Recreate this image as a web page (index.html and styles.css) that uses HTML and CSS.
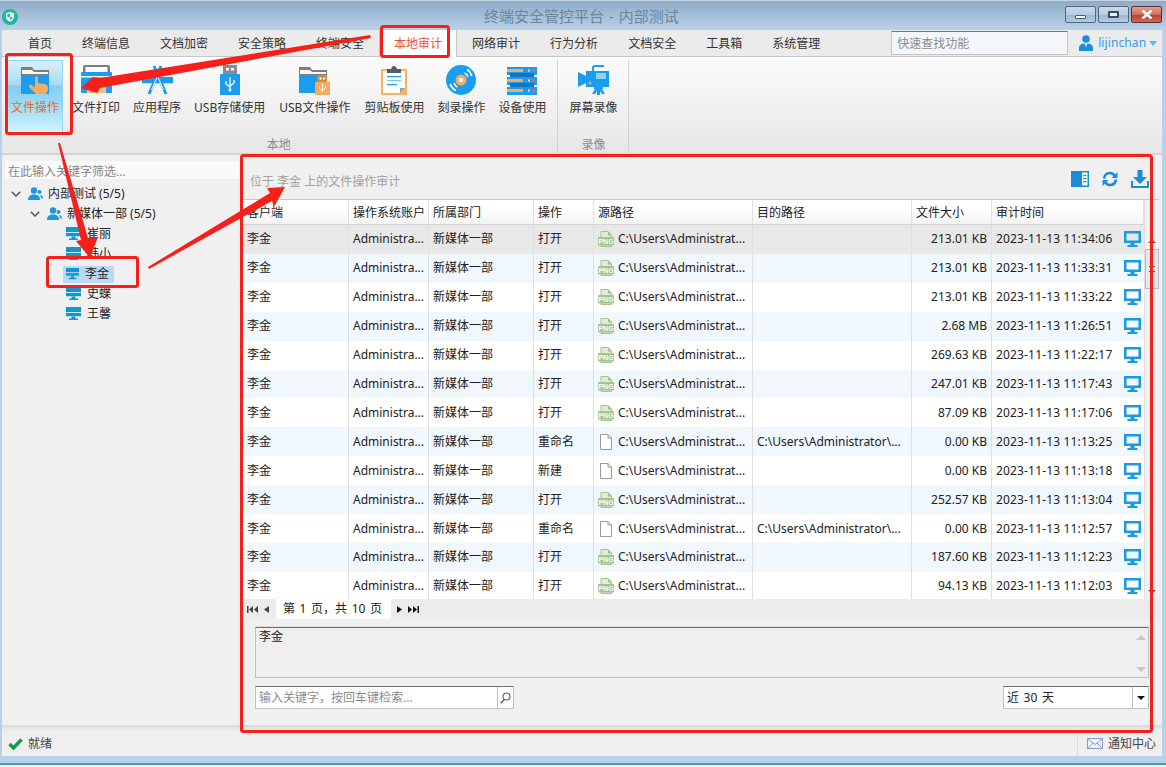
FILE: index.html
```html
<!DOCTYPE html>
<html lang="zh-CN">
<head>
<meta charset="utf-8">
<title>终端安全管控平台 - 内部测试</title>
<link rel="stylesheet" href="styles.css">
</head>
<body>
<svg class="defs" xmlns="http://www.w3.org/2000/svg">
  <symbol id="mon" viewBox="0 0 17 16"><path fill="#1a9ae0" d="M0 0h17v12H0zM2.500 2.500v7h12v-7zM6.500 12h4v2h3v2H3.500v-2h3z"/></symbol>
  <symbol id="leaf" viewBox="0 0 15 14"><path fill="#1296cf" d="M0 0h15v9H0zM5.500 9h4v2.500h2.500V13H3v-1.500h2.500z"/><path fill="#cfeaf5" d="M0 5h15v1H0z"/><path fill="#8fd0ea" d="M0 9h15v.6H0z"/></symbol>
  <symbol id="people" viewBox="0 0 15 14"><circle cx="6" cy="3.500" r="3.200" fill="#1a9ae0"/><path fill="#1a9ae0" d="M0 13c0-4 2.500-5.500 6-5.500s6 1.500 6 5.500z"/><circle cx="11.500" cy="5" r="2" fill="#1a9ae0"/><path fill="#1a9ae0" d="M11.500 8c2 0 3.500 1 3.500 3.500h-2c0-1.500-.5-2.500-1.500-3.500z"/></symbol>
  <symbol id="chev" viewBox="0 0 10 6"><path fill="none" stroke="#555" stroke-width="1.500" d="M.8.800 5 5l4.200-4.200"/></symbol>
  <symbol id="png" viewBox="0 0 16 16"><path fill="#dfeed2" stroke="#a3c48f" d="M3 .5h7l3.500 3.500v11.500H3z"/><path fill="#a3c48f" d="M10 0v4.500h4z"/><rect x="0" y="6" width="16" height="8.500" rx="1" fill="#a3c48f"/><text x="8" y="12.800" font-size="7" font-weight="700" text-anchor="middle" fill="#fff" font-family="Liberation Sans">PNG</text></symbol>
  <symbol id="doc" viewBox="0 0 16 16"><path fill="#fff" stroke="#9a9a9a" d="M2.500.5h7.500l3.500 3.500v11.500h-11z"/><path fill="none" stroke="#9a9a9a" d="M10 .5V4h3.500"/></symbol>
</svg>

<div class="window">
  <header class="titlebar">
    <svg class="logo" width="16" height="16" viewBox="0 0 16 16"><circle cx="8" cy="8" r="8" fill="#1fb89a"/><path fill="#fff" d="M8 3l4 1.300v3.500c0 2.500-1.800 4-4 5-2.200-1-4-2.500-4-5V4.300z"/><path fill="#1fb89a" d="M8 4.500v3.500H5.300c0-.5 0-1 0-2.800zM8 8h2.700c-.2 1.500-1.300 2.600-2.700 3.300z"/></svg>
    <span class="title-text">终端安全管控平台 - 内部测试</span>
    <div class="winbtns">
      <span class="winbtn"><i class="glyph-min"></i></span>
      <span class="winbtn"><i class="glyph-max"></i></span>
      <span class="winbtn winbtn-close"><svg width="12" height="9" viewBox="0 0 12 9"><path stroke="#fff" stroke-width="2.600" d="M1.500.5l9 8M10.500.5l-9 8"/></svg></span>
    </div>
  </header>

  <div class="frame">
    <nav class="tabs">
      <span class="tab">首页</span>
      <span class="tab">终端信息</span>
      <span class="tab">文档加密</span>
      <span class="tab">安全策略</span>
      <span class="tab">终端安全</span>
      <span class="tab tab-active">本地审计</span>
      <span class="tab">网络审计</span>
      <span class="tab">行为分析</span>
      <span class="tab">文档安全</span>
      <span class="tab">工具箱</span>
      <span class="tab">系统管理</span>
      <span class="quick">快速查找功能</span>
      <span class="user">
        <svg width="14" height="16" viewBox="0 0 14 16"><circle cx="7" cy="4" r="3.800" fill="#1a8fdc"/><path fill="#1a8fdc" d="M0 16v-3c0-3 2.500-4.500 5.500-4.500L7 12l1.500-3.500c3 0 5.500 1.500 5.500 4.500v3z"/></svg>
        <span class="user-name">lijinchan</span><i class="user-caret"></i>
      </span>
    </nav>

    <section class="ribbon">
      <div class="group">
        <div class="items">
          <div class="item item-active">
            <svg class="ico" width="30" height="30" viewBox="0 0 30 30"><path fill="#7d7d7d" d="M1 2h11l2 3h15v5H1z"/><path fill="#f6f6f6" d="M2 5h10l2 2h14v2H2z"/><path fill="#1a9cf0" d="M1 10h28v19H1z"/><path fill="#f4ab5e" d="M15 13c0-2 3-2 3 0v5l6 1c3 .5 4 2 4 4v2l-2 4H16l-7-7c-1-1.500 1-3 2.500-2l3.500 2.500z"/></svg>
            <span>文件操作</span>
          </div>
          <div class="item">
            <svg class="ico" width="33" height="30" viewBox="0 0 33 30"><path fill="#7d7d7d" d="M3 2a2 2 0 0 1 2-2h23a2 2 0 0 1 2 2v7H3z"/><path fill="#fff" d="M5.500 2h22v5h-22z"/><path fill="#1a9cf0" d="M1 8a1 1 0 0 1 1-1h29a1 1 0 0 1 1 1v19a1 1 0 0 1-1 1H2a1 1 0 0 1-1-1z"/><path fill="#fff" d="M1 11h31v1.500H1z"/><path fill="#f6c184" d="M7 19h19v9H7z"/></svg>
            <span>文件打印</span>
          </div>
          <div class="item">
            <svg class="ico" width="33" height="30" viewBox="0 0 33 30"><path fill="#1a9cf0" d="M1 12h31v7H1z"/><path stroke="#f4f4f4" stroke-width="1.500" d="M1 19h31"/><path stroke="#1a9cf0" stroke-width="3" d="M8 29 20 1M25 29 13 1"/><path stroke="#f4f4f4" stroke-width="1" d="M10.500 25 19.500 4M22.500 25 14 5"/></svg>
            <span>应用程序</span>
          </div>
          <div class="item item-wide">
            <svg class="ico" width="20" height="30" viewBox="0 0 20 30"><path fill="#8a8a8a" d="M3 0h14v10H3z"/><path fill="#fff" d="M6 3h3v2.500H6zM11 3h3v2.500h-3z"/><path fill="#1a9cf0" d="M0 10a1 1 0 0 1 1-1h18a1 1 0 0 1 1 1v19a1 1 0 0 1-1 1H1a1 1 0 0 1-1-1z"/><path fill="none" stroke="#fff" stroke-width="1.300" d="M10 12v13M6 16v3l4 3M14 15v3l-4 3"/><circle cx="10" cy="25" r="1.500" fill="#fff"/></svg>
            <span>USB存储使用</span>
          </div>
          <div class="item item-wide">
            <svg class="ico" width="31" height="30" viewBox="0 0 31 30"><path fill="#7d7d7d" d="M0 2h11l2 3h15v5H0z"/><path fill="#f6f6f6" d="M1 5h10l2 2h14v2H1z"/><path fill="#1a9cf0" d="M0 10h28v18H0z"/><path fill="#d08c3e" d="M18 10h10v8H18z"/><path fill="#fff" d="M20.500 12.500h2v2h-2zM24 12.500h2v2h-2z"/><path fill="#f4ab5e" d="M16 17h15v13H16z"/><path fill="none" stroke="#fff" d="M23.500 19v8M20.500 21.500v2l3 2M26.500 21v2l-3 2"/></svg>
            <span>USB文件操作</span>
          </div>
          <div class="item">
            <svg class="ico" width="26" height="30" viewBox="0 0 26 30"><path fill="#f6b261" d="M0 4h26v26H0z"/><path fill="#fff" d="M2 6h22v17l-5 5H2z"/><path fill="#9a9a9a" d="M24 23h-5v5z"/><path fill="#555f6c" d="M6 4h4c.5-1 1-3 3-3s2.500 2 3 3h4v4H6z"/><path fill="#1a9cf0" d="M6 11h14v1.200H6zM6 19h10v1.200H6z"/><path fill="#7cc4f2" d="M6 15h14v1.200H6z"/></svg>
            <span>剪贴板使用</span>
          </div>
          <div class="item">
            <svg class="ico" width="30" height="30" viewBox="0 0 30 30"><circle cx="15" cy="15" r="15" fill="#1a9cf0"/><circle cx="15" cy="15" r="5.500" fill="#f4ab5e"/><circle cx="15" cy="15" r="2.300" fill="#fff"/><path fill="none" stroke="#fff" stroke-width="1.800" d="M21 4.500c2.500 1.500 4 3.500 4.700 6.500M10 25.500C7 24 5 22 4.300 19"/><path fill="none" stroke="#fff" stroke-width="1.500" d="M18.500 8c2 .8 3 2.200 3.500 4M11.500 22c-2-.8-3-2.200-3.500-4"/></svg>
            <span>刻录操作</span>
          </div>
          <div class="item">
            <svg class="ico" width="30" height="30" viewBox="0 0 30 30"><path fill="#1a9cf0" d="M0 2h30v8H0zM0 12h30v8H0zM0 22h30v8H0z"/><path fill="#1476b8" d="M3 8h24v4H3zM3 18h24v4H3z"/><path fill="#f4ab5e" d="M0 4h16v3H0zM0 14h16v3H0zM0 24h16v3H0z"/><path fill="#e8605a" d="M25 4h3v3h-3zM25 14h3v3h-3zM25 24h3v3h-3z"/><path fill="#cfeaf8" d="M21 4.500h2v2h-2zM21 14.500h2v2h-2zM21 24.500h2v2h-2z"/></svg>
            <span>设备使用</span>
          </div>
        </div>
        <div class="group-label">本地</div>
      </div>
      <div class="group">
        <div class="items">
          <div class="item">
            <svg class="ico" width="31" height="30" viewBox="0 0 31 30"><path fill="#1a9cf0" d="M8 6h23v16H8z"/><path fill="#1a9cf0" d="M0 7l8 4v7l-8 4z"/><path fill="none" stroke="#1a9cf0" stroke-width="2" d="M15 6V3c0-1.500 1-2 2-2h9"/><path fill="#8ed2f8" d="M18 8h10v6H18z"/><circle cx="12" cy="18" r="1.500" fill="#f4ab5e"/><path fill="#1a9cf0" d="M16 22h9v2h-9zM17 24h7l3 5h-3l-2-3v4h-3v-4l-2 3h-3z"/></svg>
            <span>屏幕录像</span>
          </div>
        </div>
        <div class="group-label">录像</div>
      </div>
    </section>

    <main class="body">
      <aside class="left">
        <div class="filter">在此输入关键字筛选...</div>
        <ul class="tree">
          <li class="node"><svg class="chev" width="10" height="6"><use href="#chev"/></svg><svg class="people" width="15" height="14"><use href="#people"/></svg><span>内部测试 (5/5)</span></li>
          <li class="node node-2"><svg class="chev" width="10" height="6"><use href="#chev"/></svg><svg class="people" width="15" height="14"><use href="#people"/></svg><span>新媒体一部 (5/5)</span></li>
          <li class="node node-3"><svg width="15" height="14"><use href="#leaf"/></svg><span>崔丽</span></li>
          <li class="node node-3"><svg width="15" height="14"><use href="#leaf"/></svg><span>韩小</span></li>
          <li class="node node-3"><span class="sel"><svg width="15" height="14"><use href="#leaf"/></svg><span>李金</span></span></li>
          <li class="node node-3"><svg width="15" height="14"><use href="#leaf"/></svg><span>史蝶</span></li>
          <li class="node node-3"><svg width="15" height="14"><use href="#leaf"/></svg><span>王馨</span></li>
        </ul>
      </aside>

      <section class="right">
        <div class="toolbar">
          <span class="caption">位于 李金 上的文件操作审计</span>
          <span class="tools">
            <svg width="18" height="16" viewBox="0 0 18 16"><path fill="#1a8cd8" d="M0 0h18v16H0z"/><path fill="#fff" d="M11 1.500h5.500v13H11z"/><path fill="#1a8cd8" d="M12 4h3.500v1.200H12zM12 7h3.500v1.200H12zM12 10h3.500v1.200H12z"/></svg>
            <svg width="16" height="16" viewBox="0 0 16 16"><path fill="none" stroke="#1a8cd8" stroke-width="2.600" d="M2 7.500C2.500 4 5 2 8 2c2 0 3.500 1 4.500 2.500M14 8.500c-.5 3.500-3 5.500-6 5.500-2 0-3.500-1-4.500-2.500"/><path fill="#1a8cd8" d="M15.500 1v6h-6zM.5 15V9h6z"/></svg>
            <svg width="18" height="18" viewBox="0 0 18 18"><path fill="#1a8cd8" d="M6.500 0h5v7H16l-7 7-7-7h4.500z"/><path fill="none" stroke="#1a8cd8" stroke-width="2" d="M1 11v6h16v-6"/></svg>
          </span>
        </div>

        <div class="table-wrap">
          <div class="table">
            <div class="row head"><span class="cell">客户端</span><span class="cell">操作系统账户</span><span class="cell">所属部门</span><span class="cell">操作</span><span class="cell">源路径</span><span class="cell">目的路径</span><span class="cell">文件大小</span><span class="cell">审计时间</span></div>
            <div class="row selrow"><span class="cell">李金</span><span class="cell">Administra...</span><span class="cell">新媒体一部</span><span class="cell">打开</span><span class="cell path"><svg width="16" height="16"><use href="#png"/></svg>C:\Users\Administrat...</span><span class="cell"></span><span class="cell num">213.01 KB</span><span class="cell time">2023-11-13 11:34:06<svg width="17" height="16"><use href="#mon"/></svg></span></div>
            <div class="row alt"><span class="cell">李金</span><span class="cell">Administra...</span><span class="cell">新媒体一部</span><span class="cell">打开</span><span class="cell path"><svg width="16" height="16"><use href="#png"/></svg>C:\Users\Administrat...</span><span class="cell"></span><span class="cell num">213.01 KB</span><span class="cell time">2023-11-13 11:33:31<svg width="17" height="16"><use href="#mon"/></svg></span></div>
            <div class="row"><span class="cell">李金</span><span class="cell">Administra...</span><span class="cell">新媒体一部</span><span class="cell">打开</span><span class="cell path"><svg width="16" height="16"><use href="#png"/></svg>C:\Users\Administrat...</span><span class="cell"></span><span class="cell num">213.01 KB</span><span class="cell time">2023-11-13 11:33:22<svg width="17" height="16"><use href="#mon"/></svg></span></div>
            <div class="row alt"><span class="cell">李金</span><span class="cell">Administra...</span><span class="cell">新媒体一部</span><span class="cell">打开</span><span class="cell path"><svg width="16" height="16"><use href="#png"/></svg>C:\Users\Administrat...</span><span class="cell"></span><span class="cell num">2.68 MB</span><span class="cell time">2023-11-13 11:26:51<svg width="17" height="16"><use href="#mon"/></svg></span></div>
            <div class="row"><span class="cell">李金</span><span class="cell">Administra...</span><span class="cell">新媒体一部</span><span class="cell">打开</span><span class="cell path"><svg width="16" height="16"><use href="#png"/></svg>C:\Users\Administrat...</span><span class="cell"></span><span class="cell num">269.63 KB</span><span class="cell time">2023-11-13 11:22:17<svg width="17" height="16"><use href="#mon"/></svg></span></div>
            <div class="row alt"><span class="cell">李金</span><span class="cell">Administra...</span><span class="cell">新媒体一部</span><span class="cell">打开</span><span class="cell path"><svg width="16" height="16"><use href="#png"/></svg>C:\Users\Administrat...</span><span class="cell"></span><span class="cell num">247.01 KB</span><span class="cell time">2023-11-13 11:17:43<svg width="17" height="16"><use href="#mon"/></svg></span></div>
            <div class="row"><span class="cell">李金</span><span class="cell">Administra...</span><span class="cell">新媒体一部</span><span class="cell">打开</span><span class="cell path"><svg width="16" height="16"><use href="#png"/></svg>C:\Users\Administrat...</span><span class="cell"></span><span class="cell num">87.09 KB</span><span class="cell time">2023-11-13 11:17:06<svg width="17" height="16"><use href="#mon"/></svg></span></div>
            <div class="row alt"><span class="cell">李金</span><span class="cell">Administra...</span><span class="cell">新媒体一部</span><span class="cell">重命名</span><span class="cell path"><svg width="16" height="16"><use href="#doc"/></svg>C:\Users\Administrat...</span><span class="cell">C:\Users\Administrator\...</span><span class="cell num">0.00 KB</span><span class="cell time">2023-11-13 11:13:25<svg width="17" height="16"><use href="#mon"/></svg></span></div>
            <div class="row"><span class="cell">李金</span><span class="cell">Administra...</span><span class="cell">新媒体一部</span><span class="cell">新建</span><span class="cell path"><svg width="16" height="16"><use href="#doc"/></svg>C:\Users\Administrat...</span><span class="cell"></span><span class="cell num">0.00 KB</span><span class="cell time">2023-11-13 11:13:18<svg width="17" height="16"><use href="#mon"/></svg></span></div>
            <div class="row alt"><span class="cell">李金</span><span class="cell">Administra...</span><span class="cell">新媒体一部</span><span class="cell">打开</span><span class="cell path"><svg width="16" height="16"><use href="#png"/></svg>C:\Users\Administrat...</span><span class="cell"></span><span class="cell num">252.57 KB</span><span class="cell time">2023-11-13 11:13:04<svg width="17" height="16"><use href="#mon"/></svg></span></div>
            <div class="row"><span class="cell">李金</span><span class="cell">Administra...</span><span class="cell">新媒体一部</span><span class="cell">重命名</span><span class="cell path"><svg width="16" height="16"><use href="#doc"/></svg>C:\Users\Administrat...</span><span class="cell">C:\Users\Administrator\...</span><span class="cell num">0.00 KB</span><span class="cell time">2023-11-13 11:12:57<svg width="17" height="16"><use href="#mon"/></svg></span></div>
            <div class="row alt"><span class="cell">李金</span><span class="cell">Administra...</span><span class="cell">新媒体一部</span><span class="cell">打开</span><span class="cell path"><svg width="16" height="16"><use href="#png"/></svg>C:\Users\Administrat...</span><span class="cell"></span><span class="cell num">187.60 KB</span><span class="cell time">2023-11-13 11:12:23<svg width="17" height="16"><use href="#mon"/></svg></span></div>
            <div class="row"><span class="cell">李金</span><span class="cell">Administra...</span><span class="cell">新媒体一部</span><span class="cell">打开</span><span class="cell path"><svg width="16" height="16"><use href="#png"/></svg>C:\Users\Administrat...</span><span class="cell"></span><span class="cell num">94.13 KB</span><span class="cell time">2023-11-13 11:12:03<svg width="17" height="16"><use href="#mon"/></svg></span></div>
          </div>
          <div class="vscroll">
            <i class="arrow-up"></i>
            <span class="thumb"><i></i></span>
            <i class="arrow-down"></i>
          </div>
        </div>

        <div class="pager">
          <svg width="11" height="7" viewBox="0 0 11 7"><path fill="#444" d="M0 0h1.500v7H0zM6 0v7L2 3.500zM11 0v7L7 3.500z"/></svg>
          <svg class="pg-prev" width="5" height="7" viewBox="0 0 5 7"><path fill="#444" d="M5 0v7L0 3.500z"/></svg>
          <span class="page-text">第 1 页，共 10 页</span>
          <svg class="pg-next" width="5" height="7" viewBox="0 0 5 7"><path fill="#111" d="M0 0v7l5-3.500z"/></svg>
          <svg width="11" height="7" viewBox="0 0 11 7"><path fill="#111" d="M0 0v7l4-3.500zM5 0v7l4-3.500zM9.500 0H11v7H9.500z"/></svg>
        </div>

        <div class="detail">
          <span>李金</span>
          <div class="detail-scroll"><i class="arrow-up pale"></i><i class="arrow-down pale"></i></div>
        </div>

        <div class="searchrow">
          <div class="search">
            <span class="search-text">输入关键字，按回车键检索...</span>
            <span class="search-btn"><svg width="11" height="12" viewBox="0 0 11 12"><circle cx="6.500" cy="4.500" r="3.500" fill="none" stroke="#666" stroke-width="1.200"/><path stroke="#666" stroke-width="1.600" d="M4 7.500.8 11.200"/></svg></span>
          </div>
          <div class="range">
            <span class="range-text">近 30 天</span>
            <span class="range-btn"><i></i></span>
          </div>
        </div>
      </section>
    </main>

    <footer class="status">
      <svg width="15" height="12" viewBox="0 0 15 12"><path fill="none" stroke="#129a48" stroke-width="3.400" d="M1.500 6 5.500 10 13.500 1.500"/></svg>
      <span class="ready">就绪</span>
      <span class="notify">
        <svg width="16" height="11" viewBox="0 0 16 11"><path fill="#eef1f8" stroke="#8c9cc4" d="M.5.500h15v10H.5z"/><path fill="none" stroke="#8c9cc4" d="M.5.500 8 6.500l7.500-6M.5 10.500 6 5M15.500 10.500 10 5"/></svg>
        <span>通知中心</span>
      </span>
    </footer>
  </div>
</div>

<svg class="annot" width="1166" height="767" viewBox="0 0 1166 767">
  <g fill="none" stroke="#f5201a" stroke-width="3">
    <rect x="381.500" y="26.500" width="67" height="30" rx="2"/>
    <rect x="6.500" y="54.500" width="65" height="79" rx="2"/>
    <rect x="47.500" y="257.500" width="90" height="29" rx="2"/>
    <rect x="241.500" y="155.500" width="910" height="576" rx="2"/>
  </g>
  <g fill="#f5201a">
    <polygon points="370,35 100,78 93,77 81,88 97,93 100,88 371,38"/>
    <polygon points="58,143 60,143 88,238 98,237 90,258 76,241 81,240"/>
    <polygon points="148,267 270,193 267,188 285,187 274,207 272,201 149,269"/>
  </g>
</svg>
</body>
</html>
```
FILE: styles.css
```css
* { box-sizing: border-box; }
html, body { margin: 0; padding: 0; }
body {
  position: relative;
  width: 1166px;
  height: 767px;
  overflow: hidden;
  background: #fff;
  font-family: "Noto Sans", "Noto Sans CJK SC", sans-serif;
  font-size: 12px;
  line-height: 16px;
  color: #222;
}
i { display: block; }
ul { list-style: none; margin: 0; padding: 0; }
.defs { display: none; }

.window {
  height: 765px;
  padding: 0 4px 7px 2px;
  background: #b8d1e9;
  border-bottom: 2px solid #3aa0c0;
  display: flex;
  flex-direction: column;
}

/* title bar */
.titlebar {
  height: 30px;
  margin: 0 -4px 0 -2px;
  padding: 0 4px 0 2px;
  flex: none;
  display: flex;
  align-items: center;
  position: relative;
  background: linear-gradient(#8fabc7, #b9d2ea);
  border-top: 1px solid #c4d4e2;
}
.logo { flex: none; margin-top: 2px; }
.title-text {
  position: absolute;
  left: 484px;
  top: 6px;
  font-size: 15px;
  line-height: 18px;
  word-spacing: 1px;
  color: #6f8499;
  white-space: nowrap;
}
.winbtns { margin-left: auto; display: flex; gap: 2px; margin-top: -2px; }
.winbtn {
  width: 31px;
  height: 17px;
  display: flex;
  align-items: center;
  justify-content: center;
  border: 1px solid #55647f;
  border-radius: 2px;
  background: linear-gradient(#c8d9ea 0%, #b6cde3 50%, #9ab7d3 51%, #b0cce6 100%);
}
.winbtn-close { background: linear-gradient(#e2a090 0%, #cf6e5c 50%, #b33f2e 51%, #cc6a58 100%); border-color: #5e2a30; }
.glyph-min { width: 11px; height: 4px; background: #fff; border: 1px solid #4c5a70; border-radius: 1px; margin-top: 5px; }
.glyph-max { width: 11px; height: 7px; background: #e8eff7; border: 2px solid #3c4a60; border-radius: 1px; }

.frame { flex: 1; display: flex; flex-direction: column; min-height: 0; }

/* tabs */
.tabs {
  height: 27px;
  flex: none;
  display: flex;
  align-items: stretch;
  padding-left: 11px;
  background: #ebebeb;
  border-bottom: 1px solid #c6c6c6;
}
.tab { padding: 0 15px; line-height: 27px; color: #333; white-space: nowrap; }
.tab-active {
  background: #fff;
  color: #f2511e;
  border-left: 1px solid #c6c6c6;
  border-right: 1px solid #c6c6c6;
  padding: 0 14px;
  height: 27px;
}
.quick {
  margin-left: 56px;
  margin-top: 1px;
  width: 177px;
  height: 24px;
  padding-left: 5px;
  line-height: 23px;
  color: #8b8b8b;
  background: #f3f6fb;
  border: 1px solid #c3c3c3;
  border-top-color: #777;
}
.user { display: flex; align-items: center; gap: 5px; margin-left: 11px; }
.user-name { color: #2b9ef0; letter-spacing: .1px; }
.user-caret {
  width: 0; height: 0;
  margin-left: -2px;
  border: 4px solid transparent;
  border-top: 5px solid #45c4ee;
  border-bottom: 0;
}

/* ribbon */
.ribbon {
  height: 98px;
  flex: none;
  display: flex;
  padding-left: 5px;
  background: linear-gradient(#fcfcfc, #e6e6e6);
  border-bottom: 2px solid #d4d4d4;
}
.group {
  display: flex;
  flex-direction: column;
  padding-right: 7px;
  margin-right: 7px;
  border-right: 1px solid #d2d2d2;
  margin-top: 3px;
}
.items { display: flex; gap: 5px; height: 75px; flex: none; }
.item {
  padding: 5px 4px 0;
  display: flex;
  flex-direction: column;
  align-items: center;
  color: #333;
  white-space: nowrap;
}
.item-wide { padding-right: 5px; }
.ico { flex: none; height: 30px; margin-bottom: 5px; }
.item-active {
  color: #f2651e;
  border: 1px solid #8fd6f2;
  padding: 4px 3px 0;
  background: linear-gradient(#d8f0fa 0%, #a6dcf6 33%, #84ccf0 34%, #a8e0f8 70%, #d4f6fe 100%);
}
.group-label { text-align: center; color: #8a8a8a; line-height: 18px; margin-top: 1px; flex: none; }

/* body */
.body {
  flex: 1;
  min-height: 0;
  display: flex;
  padding-top: 5px;
  background: #f0f0f0;
  border-bottom: 2px solid #dcdcdc;
}
.left { width: 241px; flex: none; padding-left: 3px; }
.filter {
  width: 235px;
  height: 18px;
  margin-top: 1px;
  padding-left: 3px;
  line-height: 21px;
  color: #888;
  background: #fafafa;
}
.tree { margin-top: 5px; }
.node { height: 20px; display: flex; align-items: center; padding-left: 6px; white-space: nowrap; color: #222; }
.node .chev { margin-right: 7px; }
.node .people { margin-right: 5px; }
.node-2 { padding-left: 25px; }
.node-3 { padding-left: 61px; }
.node-3 svg { margin-right: 6px; }
.sel { display: flex; align-items: center; height: 17px; margin: 0 0 0 -3px; padding: 0 5px 0 3px; width: 51px; background: #bcd9f2; }

.right { width: 916px; flex: none; display: flex; flex-direction: column; }
.toolbar { height: 40px; flex: none; display: flex; align-items: center; padding: 4px 10px 0 7px; border-bottom: 1px solid #c8c8c8; }
.caption { color: #a0a0a0; margin-top: 1px; }
.tools { margin-left: auto; display: flex; align-items: center; gap: 13px; margin-top: -6px; }

.table-wrap { height: 399px; flex: none; display: flex; overflow: hidden; }
.table { width: 901px; flex: none; overflow: hidden; background: #fff; }
.row {
  display: grid;
  grid-template-columns: 106px 80px 105px 60px 159px 159px 80px 152px;
  height: 28.920px;
  background: #fff;
}
.row.alt { background: #f0f7fd; }
.row.selrow { background: #e8e8e8; }
.row.head { height: 25px; background: linear-gradient(#fff 30%, #f3f3f3); border-bottom: 1px solid #d4d4d4; }
.row.head .cell { padding-top: 2px; }
.cell {
  padding: 0 4px;
  display: flex;
  align-items: center;
  white-space: nowrap;
  overflow: hidden;
  border-right: 1px solid #e0e0e0;
}
.path svg { flex: none; margin-right: 4px; }
.num { justify-content: flex-end; padding-right: 4px; }
.time { letter-spacing: .16px; padding-right: 0; border-right: 0; }
.time svg { flex: none; margin-left: auto; margin-right: 3px; }

.vscroll { flex: 1; position: relative; background: #f0f0f0; border-left: 1px solid #e0e0e0; display: flex; flex-direction: column; align-items: center; padding-top: 39px; }
.thumb { width: 14px; height: 40px; margin-top: 6px; background: #e8e8e8; border: 1px solid #bbb; display: flex; align-items: center; justify-content: center; }
.thumb i { width: 6px; height: 6px; border-top: 1px solid #555; border-bottom: 1px solid #555; }
.arrow-up { width: 0; height: 0; border: 4px solid transparent; border-bottom: 4px solid #555; border-top: 0; }
.arrow-down { width: 0; height: 0; border: 4px solid transparent; border-top: 4px solid #555; border-bottom: 0; margin-top: auto; margin-bottom: 5px; }

.pager { height: 20px; flex: none; display: flex; align-items: center; padding-left: 4px; background: #ececec; }
.pg-prev { margin-left: 6px; margin-right: 7px; }
.pg-next { margin-left: 6px; margin-right: 6px; }
.page-text { width: 115px; height: 20px; padding-left: 7px; line-height: 20px; word-spacing: 1.500px; background: #fff; color: #222; white-space: nowrap; }

.detail {
  height: 51px;
  flex: none;
  margin: 8px 10px 0 12px;
  padding: 1px 3px;
  position: relative;
  display: flex;
  background: #efefef;
  border: 1px solid #c0c0c0;
  border-top-color: #6d6d6d;
  box-shadow: 0 -2px 0 -1px #ddd;
}
.detail-scroll { margin-left: auto; margin-right: -3px; margin-top: -1px; margin-bottom: -1px; width: 15px; display: flex; flex-direction: column; align-items: center; padding-top: 7px; }
.arrow-up.pale { border-bottom-color: #c8c8c8; border-left-width: 5px; border-right-width: 5px; border-bottom-width: 5px; }
.arrow-down.pale { border-top-color: #c8c8c8; border-left-width: 5px; border-right-width: 5px; border-top-width: 5px; }

.searchrow { display: flex; justify-content: space-between; margin: 8px 10px 0 12px; height: 23px; }
.search, .range { height: 23px; display: flex; background: #fff; border: 1px solid #c0c0c0; border-top-color: #6d6d6d; }
.search { width: 259px; }
.search-text { flex: 1; padding-left: 3px; line-height: 21px; color: #8b8b8b; white-space: nowrap; }
.search-btn { width: 16px; border-left: 1px solid #c0c0c0; display: flex; align-items: center; justify-content: center; }
.range { width: 146px; }
.range-text { flex: 1; padding-left: 3px; line-height: 21px; word-spacing: 1.500px; color: #222; }
.range-btn { width: 16px; border-left: 1px solid #c0c0c0; display: flex; align-items: center; justify-content: center; }
.range-btn i { width: 0; height: 0; border: 4px solid transparent; border-top: 4px solid #111; border-bottom: 0; }

/* status */
.status {
  height: 29px;
  flex: none;
  display: flex;
  align-items: center;
  padding: 4px 0 0 6px;
  background: linear-gradient(#e2e2e2 0, #efefef 4px);
}
.ready { margin-left: 5px; color: #444; }
.notify { margin-left: auto; align-self: stretch; width: 85px; display: flex; align-items: center; gap: 5px; padding-left: 9px; border-left: 1px solid #dcdcdc; color: #444; white-space: nowrap; }

/* annotation overlay */
.annot { position: absolute; left: 0; top: 0; pointer-events: none; }
```
